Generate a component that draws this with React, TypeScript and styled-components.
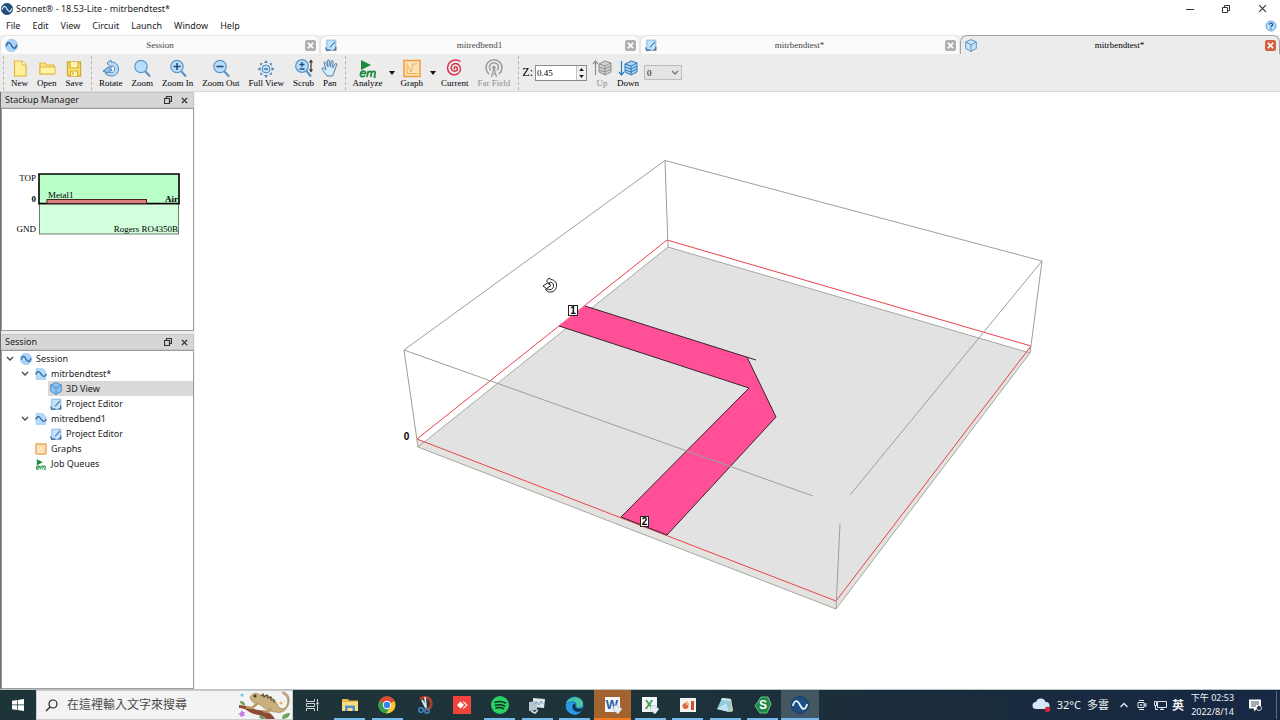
import React from "react";
import styled, { createGlobalStyle, css } from "styled-components";

const SANS = `"Noto Sans", "Noto Sans CJK TC", sans-serif`;
const SERIF = `"Liberation Serif", serif`;

const GlobalStyle = createGlobalStyle`
  * { box-sizing: border-box; }
  body { margin: 0; background: #fff; font-family: ${SANS}; font-size: 9px; color: #222; }
  button { border: 0; background: none; padding: 0; margin: 0; font: inherit; color: inherit; }
  svg { display: block; flex: none; }
  ul { list-style: none; margin: 0; padding: 0; }
`;

const Window = styled.div`
  display: flex;
  flex-direction: column;
  height: 100vh;
  overflow: hidden;
`;

/* ---------- title and menu ---------- */

const TitleBar = styled.header`
  display: flex;
  align-items: center;
  height: 17px;
  flex: none;
  padding-left: 1px;
  gap: 3px;
`;

const Title = styled.h1`
  flex: 1;
  margin: 0;
  font-size: 9px;
  line-height: 16px;
  font-weight: 400;
`;

const WindowButton = styled.button`
  width: 36px;
  height: 16px;
  display: flex;
  align-items: center;
  justify-content: center;
`;

const WindowButtons = styled.div`
  display: flex;
`;

const MenuBar = styled.nav`
  display: flex;
  align-items: center;
  height: 18px;
  flex: none;
  padding-right: 3px;
`;

const MenuItem = styled.button`
  padding: 0 6px;
  line-height: 16px;
`;

const Spacer = styled.div`
  flex: 1;
`;

/* ---------- document tabs ---------- */

const TabStrip = styled.div`
  display: grid;
  grid-template-columns: repeat(4, 1fr);
  height: 19px;
  flex: none;
  background: #f1f1f1;
`;

const Tab = styled.div<{ $active?: boolean }>`
  display: flex;
  align-items: center;
  padding: 0 3px 0 4px;
  border: 1px solid ${(p) => (p.$active ? "#a2a2a2" : "#e6e6e6")};
  border-bottom: 0;
  border-radius: 7px 7px 0 0;
  background: ${(p) => (p.$active ? "#ececec" : "#fbfbfb")};
  color: ${(p) => (p.$active ? "#000" : "#444")};
`;

const TabName = styled.button`
  flex: 1;
  padding-right: 3px;
  font-family: ${SERIF};
  font-size: 9px;
  line-height: 16px;
  text-align: center;
`;

const TabClose = styled.button<{ $active?: boolean }>`
  width: 11px;
  height: 11px;
  display: flex;
  align-items: center;
  justify-content: center;
  border-radius: 2px;
  background: ${(p) => (p.$active ? "#d3623f" : "#b0b0b0")};
`;

/* ---------- tool bar ---------- */

const ToolBar = styled.div`
  display: flex;
  align-items: center;
  height: 38px;
  flex: none;
  background: #ececec;
  border-bottom: 1px solid #dadada;
`;

const ToolSeparator = styled.div`
  width: 7px;
  height: 34px;
  flex: none;
  display: flex;
  justify-content: center;
  &::before {
    content: "";
    border-left: 1px dashed #b5b5b5;
  }
`;

const Tool = styled.button`
  display: flex;
  flex-direction: column;
  align-items: center;
  padding: 1px 5px 0 4px;
  font-family: ${SERIF};
  font-size: 9px;
  line-height: 10px;
  color: #000;
  white-space: nowrap;
  svg {
    margin: 0 -4px;
  }
  &:disabled {
    color: #8c8c8c;
  }
`;

const ToolArrow = styled.button`
  width: 9px;
  height: 34px;
  display: flex;
  align-items: center;
  justify-content: center;
`;

const DepthField = styled.label`
  display: flex;
  align-items: center;
  gap: 2px;
  margin-right: 5px;
  font-family: ${SERIF};
  font-size: 12px;
  color: #000;
`;

const Spin = styled.span`
  display: flex;
  width: 52px;
  height: 16px;
  border: 1px solid #8a8a8a;
  background: #fff;
`;

const SpinInput = styled.input`
  flex: 1;
  min-width: 0;
  border: 0;
  padding: 0 1px;
  font-family: ${SERIF};
  font-size: 9px;
  background: transparent;
  color: #000;
`;

const SpinButtons = styled.span`
  display: flex;
  flex-direction: column;
  width: 10px;
  background: #f0f0f0;
  border-left: 1px solid #c4c4c4;
  button {
    flex: 1;
    display: flex;
    align-items: center;
    justify-content: center;
  }
`;

const SelectBox = styled.span`
  display: grid;
  align-items: center;
  width: 38px;
  height: 15px;
  border: 1px solid #bcbcbc;
  background: #e4e4e4;
  select,
  svg {
    grid-area: 1 / 1;
  }
  svg {
    justify-self: end;
    margin-right: 2px;
    pointer-events: none;
  }
  select {
    appearance: none;
    width: 100%;
    border: 0;
    padding: 0 2px;
    background: transparent;
    font-family: ${SERIF};
    font-size: 9px;
    color: #000;
  }
`;

/* ---------- side panels ---------- */

const Body = styled.div`
  flex: 1;
  min-height: 0;
  display: flex;
`;

const Side = styled.aside`
  width: 195px;
  flex: none;
  display: flex;
  flex-direction: column;
  gap: 3px;
  background: #ececec;
  border-left: 1px solid #6e6e6e;
  border-right: 1px solid #f4f4f4;
`;

const Panel = styled.section<{ $grow?: boolean }>`
  display: flex;
  flex-direction: column;
  ${(p) =>
    p.$grow
      ? css`
          flex: 1;
          min-height: 0;
        `
      : css`
          flex: none;
        `}
`;

const PanelHeader = styled.div`
  display: flex;
  align-items: center;
  height: 16px;
  padding: 0 5px 0 4px;
  background: #d6d6d6;
  border: 1px solid #c6c6c6;
  border-left: 0;
`;

const PanelTitle = styled.h2`
  flex: 1;
  margin: 0;
  font-size: 9px;
  line-height: 14px;
  font-weight: 400;
`;

const PanelButton = styled.button`
  width: 16px;
  height: 14px;
  display: flex;
  align-items: center;
  justify-content: center;
  & + & {
    margin-right: -4px;
  }
`;

const PanelBody = styled.div`
  flex: 1;
  background: #fff;
  border: 1px solid #9c9c9c;
`;

const StackupBody = styled(PanelBody)`
  padding: 62px 0 93px 12px;
`;

const TreeRow = styled.li<{ $level: number }>`
  display: flex;
  align-items: center;
  height: 15px;
  padding-left: ${(p) => 1 + p.$level * 15}px;
`;

const TreeToggle = styled.button`
  width: 13px;
  height: 15px;
  display: flex;
  align-items: center;
  justify-content: center;
`;

const TreeLabel = styled.button<{ $selected?: boolean }>`
  flex: 1;
  display: flex;
  align-items: center;
  gap: 4px;
  height: 15px;
  margin-left: 2px;
  padding-left: 2px;
  text-align: left;
  line-height: 15px;
  background: ${(p) => (p.$selected ? "#d9d9d9" : "transparent")};
`;

const Viewport = styled.main`
  flex: 1;
  min-width: 0;
  background: #fff;
  svg {
    width: 100%;
    height: 100%;
  }
`;

/* ---------- task bar ---------- */

const TaskBar = styled.footer`
  display: flex;
  height: 31px;
  flex: none;
  border-top: 1px solid #b9c0c0;
  background: linear-gradient(90deg, #1d3439 0%, #1d3339 50%, #1b2c3c 70%, #162843 100%);
  color: #f2f4f6;
`;

const StartButton = styled.button`
  width: 36px;
  display: flex;
  align-items: center;
  justify-content: center;
`;

const SearchBox = styled.label`
  width: 257px;
  display: flex;
  align-items: center;
  padding-left: 8px;
  background: #f3f3f3;
  border: 1px solid #c9cdcd;
`;

const SearchInput = styled.input`
  flex: 1;
  min-width: 0;
  border: 0;
  padding: 0 0 0 9px;
  background: transparent;
  font-family: ${SANS};
  font-size: 12px;
  line-height: 18px;
  &::placeholder {
    color: #4c4c4c;
    opacity: 1;
  }
`;

const TaskView = styled.button`
  width: 38px;
  display: flex;
  align-items: center;
  justify-content: center;
`;

const Apps = styled.div`
  display: grid;
  grid-template-columns: repeat(13, 1fr);
  width: 488px;
`;

type AppState = "idle" | "open" | "alert" | "current";

const AppButton = styled.button<{ $state: AppState }>`
  display: flex;
  align-items: center;
  justify-content: center;
  border-top: 2px solid transparent;
  border-bottom: 2px solid transparent;
  ${(p) =>
    p.$state === "open" &&
    css`
      background: linear-gradient(#76b9ed, #76b9ed) 50% 100% / 31px 2px no-repeat border-box;
    `}
  ${(p) =>
    p.$state === "alert" &&
    css`
      background: #a3632f;
      border-color: #a3632f transparent #f37a1f;
    `}
  ${(p) =>
    p.$state === "current" &&
    css`
      background: #445863;
      border-color: #445863 transparent #76b9ed;
    `}
`;

const Tray = styled.div`
  display: flex;
  align-items: center;
`;

const Weather = styled.button`
  display: flex;
  align-items: center;
  gap: 6px;
  font-size: 11px;
  line-height: 16px;
  margin-right: 6px;
`;

const TrayButton = styled.button`
  width: 18px;
  height: 28px;
  display: flex;
  align-items: center;
  justify-content: center;
`;

const InputMode = styled(TrayButton)`
  font-size: 12px;
  font-weight: 700;
`;

const Clock = styled.button`
  width: 51px;
  font-size: 9px;
  line-height: 14px;
  text-align: center;
`;

const NoticeButton = styled.button`
  width: 34px;
  display: flex;
  align-items: center;
  justify-content: center;
`;

const DesktopEdge = styled.button`
  width: 4px;
  height: 28px;
  margin-left: 4px;
  border-left: 1px solid #5d6b80;
`;

/* ---------- icons ---------- */

const BLUE = "#4d87b5";
const PALE = "#b9dcfa";

const WaveIcon = ({ size = 12, dark }: { size?: number; dark?: boolean }) => (
  <svg width={size} height={size} viewBox="0 0 20 20">
    <circle cx="10" cy="10" r="9.5" fill={dark ? "#1f4e80" : "#a9d3fa"} stroke={dark ? "#173c64" : "#8fc0ee"} />
    <path d="M2 11C4 4 7 4 10 10s6 6 8-1" fill="none" stroke={dark ? "#e8f3ff" : "#1f5c94"} strokeWidth="2" />
  </svg>
);

const ProjectIcon = () => (
  <svg width="12" height="12" viewBox="0 0 20 20">
    <path d="M2 1h11l5 5v13H2z" fill="#b5d9fb" stroke="#8fc0ee" />
    <path d="M1 11C4 4 7 5 10 10s6 6 9 0" fill="none" stroke="#1f5c94" strokeWidth="2" />
  </svg>
);

const EditorIcon = () => (
  <svg width="12" height="12" viewBox="0 0 20 20">
    <path d="M3 2h15v14l-3 3H3z" fill="#c5e2fb" stroke="#7fb0dc" strokeWidth="1.5" />
    <path d="M16 4L9 12l-2 3 3-1.500L17 6z" fill="#3774ad" />
    <path d="M1 14l2 5 6-1M18 13v5h-4" fill="none" stroke="#35648f" strokeWidth="2" />
  </svg>
);

const CubeIcon = ({ strong }: { strong?: boolean }) => (
  <svg width="12" height="13" viewBox="0 0 20 22">
    <path d="M10 1l9 4v11l-9 5-9-5V5z" fill={strong ? "#8cc3f5" : "#c5e4fb"} stroke="#3f7fb3" strokeWidth="1.3" />
    <path d="M1 5l9 5 9-5M10 10v11" fill="none" stroke="#3f7fb3" strokeWidth="1.3" />
  </svg>
);

const GraphSmallIcon = () => (
  <svg width="12" height="12" viewBox="0 0 20 20">
    <rect x="1.5" y="1.5" width="17" height="17" rx="1" fill="#fbd9ab" stroke="#e9a455" strokeWidth="2" />
    <path d="M6 5v10M6 15h9M9 12V7l4 5" fill="none" stroke="#fff5e2" strokeWidth="1.6" />
  </svg>
);

const EmMark = ({ size = 20 }: { size?: number }) => (
  <svg width={size} height={size} viewBox="0 0 20 20">
    <path d="M3 2l10 5-10 5z" fill="#1b8a3c" />
    <path
      d="M2.500 15.500h5c.6-3-4-3.500-5 .2-.8 3.500 3.200 3.500 4.600 1.800M9 19l1.300-6M10 15c1.500-2.300 4-2.300 3.400.4L12.600 19M13.400 15c1.500-2.300 4.300-2.300 3.700.4L16.300 19h1.500"
      fill="none"
      stroke="#1b8a3c"
      strokeWidth="1.7"
    />
  </svg>
);

const Lens = ({ children }: { children?: React.ReactNode }) => (
  <svg width="20" height="20" viewBox="0 0 20 20">
    <path d="M13 13l5 5.500" stroke="#5d95c2" strokeWidth="2.2" />
    <circle cx="9" cy="8.500" r="6.200" fill={PALE} stroke="#5d95c2" strokeWidth="1.2" />
    {children}
  </svg>
);

const LayerBox = ({ up }: { up?: boolean }) => {
  const line = up ? "#8d8d8d" : "#2f79b5";
  const fill = up ? "#d3d3d3" : "#a9d3f7";
  return (
    <svg width="20" height="20" viewBox="0 0 20 20">
      <path d="M7 6l6-3 6 2v9l-6 3-6-3z" fill={fill} stroke={line} />
      <path d="M7 6l6 2 6-3M7 9l6 2 6-3M7 12l6 2 6-3M13 8v9" fill="none" stroke={line} />
      <path d={up ? "M3.500 17V3M1 6l2.500-3L6 6" : "M3.500 3v14M1 14l2.500 3L6 14"} fill="none" stroke={line} strokeWidth="1.2" />
    </svg>
  );
};

const toolIcons: Record<string, React.ReactNode> = {
  New: (
    <svg width="20" height="20" viewBox="0 0 20 20">
      <path d="M4.500 3h7.500l4 4v11H4.500z" fill="#fff09a" stroke="#dfb63c" strokeWidth="1.2" />
      <path d="M12 3v4h4" fill="#fffbe0" stroke="#dfb63c" />
    </svg>
  ),
  Open: (
    <svg width="20" height="20" viewBox="0 0 20 20">
      <path d="M3 16V5h5l1.500 2H17v9z" fill="#fbe584" stroke="#dfb63c" strokeWidth="1.2" />
      <path d="M3 16V9h15v7z" fill="#fff3a6" stroke="#dfb63c" />
    </svg>
  ),
  Save: (
    <svg width="20" height="20" viewBox="0 0 20 20">
      <path d="M3.500 4h13v14h-12l-1-1z" fill="#fde873" stroke="#d4a92f" strokeWidth="1.4" />
      <path d="M6 4v6h8V4M6.500 18v-5h7v5M9 14v3" fill="#fff6b8" stroke="#d4a92f" strokeWidth="1.2" />
    </svg>
  ),
  Rotate: (
    <svg width="20" height="20" viewBox="0 0 20 20">
      <path d="M6 5l4-3v2c5 0 7.500 3 7.500 7s-3 7-7 7c-3.500 0-6-1.500-6.500-3.500l3-1c1 1.500 5.500 2 6.500-1S13 8 10 8v2z" fill={PALE} stroke={BLUE} />
      <path d="M2 13l5-4 4 3-4 3z" fill="#8fbfe8" stroke={BLUE} />
    </svg>
  ),
  Zoom: <Lens />,
  "Zoom In": (
    <Lens>
      <path d="M5.500 8.500h7M9 5v7" stroke="#1d4f7c" strokeWidth="1.6" />
    </Lens>
  ),
  "Zoom Out": (
    <Lens>
      <path d="M5.500 8.500h7" stroke="#1d4f7c" strokeWidth="1.6" />
    </Lens>
  ),
  "Full View": (
    <svg width="20" height="20" viewBox="0 0 20 20">
      <circle cx="10" cy="11" r="4" fill={PALE} stroke={BLUE} />
      <path d="M10 2l2 3H8zM10 20l2-3H8zM1.500 11l3-2v4zM18.500 11l-3-2v4zM4 5l3 .5L4.500 8zM16 5l-3 .5L15.500 8zM4 17l3-.5L4.500 14zM16 17l-3-.5 2.500-2.500z" fill="#4a86ba" />
      <path d="M8 11h4" stroke="#1d4f7c" />
    </svg>
  ),
  Scrub: (
    <svg width="20" height="20" viewBox="0 0 20 20">
      <path d="M12 12.500l5 6" stroke="#5d95c2" strokeWidth="2.2" />
      <circle cx="8" cy="8" r="6.3" fill={PALE} stroke="#5d95c2" strokeWidth="1.2" />
      <path d="M5.500 6.500h5M8 4v5M5.500 11h5" stroke="#1d4f7c" strokeWidth="1.3" />
      <path d="M17 3v10M15.500 4.500L17 2.500l1.500 2M15.500 11.500l1.500 2 1.500-2" fill="none" stroke="#333" strokeWidth="1.2" />
    </svg>
  ),
  Pan: (
    <svg width="20" height="20" viewBox="0 0 20 20">
      <path
        d="M7 18C5 15 3 13 2 11c0-1.500 1.500-1.500 2.500-.3L6 12 4 5c0-1.500 1.500-1.500 2-.3L8 9 7.500 3c0-1.500 1.800-1.500 2 0l.8 6 1-5.500c.3-1.500 2-1.200 1.800.3L12.500 10 15 6c.8-1.200 2.300-.5 1.700.8L14.500 13c-.3 2-1.500 3.500-2 5z"
        fill="#d5eafb"
        stroke="#4d7fa8"
      />
    </svg>
  ),
  Analyze: <EmMark />,
  Graph: (
    <svg width="20" height="20" viewBox="0 0 20 20">
      <rect x="2" y="2.500" width="16" height="16" fill="#ffe3b8" stroke="#ef9d3c" strokeWidth="1.5" />
      <path d="M5 5v10.500h11M6 8l3 6 2-8h4" fill="none" stroke="#f3ae5c" />
    </svg>
  ),
  Current: (
    <svg width="20" height="20" viewBox="0 0 20 20">
      <path
        d="M10 11c-1.500-.5-.8-2.500.8-2.200 2.200.4 2.200 3.700-.3 4.300-3 .6-4.800-2-4.200-4.500C7 5.500 11 4.700 13.500 6.700c3 2.500 2.500 7.300-.8 9.200-3.500 2-8 .5-9.500-3C1.500 9 3.500 4 7.500 2.500c3-1 6-.5 8 1"
        fill="none"
        stroke="#d8354c"
        strokeWidth="1.5"
      />
    </svg>
  ),
  "Far Field": (
    <svg width="20" height="20" viewBox="0 0 20 20">
      <path d="M5 16a8 8 0 1 1 10 0M7 12.500a4.500 4.500 0 1 1 6 0" fill="none" stroke="#9a9a9a" strokeWidth="1.5" />
      <circle cx="10" cy="9.500" r="1.7" fill="#9a9a9a" />
      <path d="M10 10l-2.500 9M10 10l2.500 9M8 16h4" stroke="#9a9a9a" strokeWidth="1.2" />
    </svg>
  ),
};

const Cross = ({ size = 7, color = "#333", weight = 1 }: { size?: number; color?: string; weight?: number }) => (
  <svg width={size} height={size} viewBox="0 0 8 8">
    <path d="M1 1l6 6M7 1L1 7" stroke={color} strokeWidth={weight} />
  </svg>
);

const Restore = ({ weight = 1 }: { weight?: number }) => (
  <svg width="8" height="8" viewBox="0 0 8 8">
    <path d="M.5 2.500h5v5h-5zM2.500 2.500v-2h5v5h-2" fill="none" stroke="#333" strokeWidth={weight} />
  </svg>
);

const Chevron = ({ up, color = "#444" }: { up?: boolean; color?: string }) => (
  <svg width="8" height="6" viewBox="0 0 8 6">
    <path d={up ? "M.5 5L4 1.500 7.500 5" : "M1 1l3 3 3-3"} fill="none" stroke={color} strokeWidth="1.3" />
  </svg>
);

const Triangle = ({ up, small }: { up?: boolean; small?: boolean }) => (
  <svg width={small ? 5 : 6} height={small ? 3 : 4} viewBox="0 0 6 4">
    <path d={up ? "M0 4h6L3 0z" : "M0 0h6L3 4z"} fill="#111" />
  </svg>
);

/* ---------- drawings ---------- */

const StackupDrawing = () => (
  <svg width="166" height="66" viewBox="14 171 166 66" fontFamily={SERIF} fontSize="9" fill="#000">
    <rect x="39.500" y="204" width="139" height="30" fill="#d2ffdc" stroke="#6d7d70" />
    <rect x="39" y="174" width="140" height="30" fill="#b8ffc8" />
    <path d="M39 204.500V174h140v30.500M39 203.500h140" fill="none" stroke="#000" strokeWidth="1.6" />
    <rect x="47" y="199.500" width="99.500" height="4" fill="#d98080" stroke="#4a1f1f" />
    <text x="36" y="181" textAnchor="end">TOP</text>
    <text x="36" y="202" textAnchor="end" fontWeight="700">0</text>
    <text x="36" y="232" textAnchor="end">GND</text>
    <text x="48" y="198">Metal1</text>
    <text x="178" y="202" textAnchor="end" fontWeight="700">Air</text>
    <text x="178" y="232" textAnchor="end">Rogers RO4350B</text>
  </svg>
);

const Scene = () => (
  <svg viewBox="195 92 1085 597" preserveAspectRatio="xMidYMid meet" role="img" aria-label="3D View">
    <polygon points="668,247 1030,353 836,609 418,447" fill="#e2e2e2" />
    <polygon points="417,439 836,601 1031,345 1030,353 836,609 418,447" fill="#e3e2df" />
    <path d="M668 247L1030 353 836 609 418 447z" fill="none" stroke="#a3a9a3" />
    <path d="M667 240L1031 346 836 601 417 439z" fill="none" stroke="#e8434c" />
    <polygon points="585,306 747,357 776,417 667,535 621,517 749,388 559,326" fill="#ff4f97" />
    <path d="M585 306L756 360M747 357l29 60-109 118-46-18L749 388 559 326" fill="none" stroke="#38262e" />
    <path
      d="M404 350L665 160.500 1042 261M665 160.500L668 247M404 350l14 97M1042 261l-12 92M404 350l409 146M1042 261L850 495M840 524l-4 85"
      fill="none"
      stroke="#9b9f9f"
    />
    <g fontFamily={`"Liberation Sans", sans-serif`} fontSize="10" fontWeight="700" textAnchor="middle" fill="#000">
      <rect x="568.500" y="305.500" width="9" height="10" fill="#fff" stroke="#222" />
      <text x="573" y="314">1</text>
      <rect x="640.500" y="516.500" width="8" height="10" fill="#fff" stroke="#222" />
      <text x="644.500" y="525">2</text>
      <text x="406.500" y="440">0</text>
    </g>
    <g fill="#fff" stroke="#222">
      <path d="M549 278l2 1.500c4 .5 6 3.500 5.500 7s-3.500 6-7 5.500c-2-.3-3.500-1.500-4-3l3 .2c2 1 4.500 0 5-2.500s-1-4.500-3.500-4.700l-.5 2-3-3z" />
      <path d="M543 286l4.500-3 3.500 2.500-4.500 3z" />
    </g>
  </svg>
);

const Chameleon = () => (
  <svg width="54" height="28" viewBox="0 0 54 28">
    <path d="M1 14c8 0 12 4 20 5 7 1 12 2 16 9h-9c-3-4-8-4-12-5C10 21 8 17 1 17z" fill="#8d4a35" />
    <path
      d="M12 6c2-4 8-5 11-1 8-2 13 2 16 8 2 4 5 6 8 4 3-3 4-8 1-12-1-1-3-2-4-4 5 0 8 5 7 10-1 7-7 12-13 10-6 0-12-4-17-8-4 0-8-2-9-7z"
      fill="#cbb07e"
      stroke="#9a8050"
      strokeWidth=".7"
    />
    <path d="M23 5l2-2 1 3 3-2 1 3 3-1 0 3 3 0 0 3" fill="none" stroke="#5e5038" strokeWidth="1.2" />
    <path d="M20 12l-6 5-6-1M33 17l-3 4-5-1" fill="none" stroke="#b99a63" strokeWidth="2.4" />
    <circle cx="17" cy="5" r="1.5" fill="#43382a" />
    <path d="M2 10c3 0 5 1 5 4-3 0-5-1-5-4zM44 28c0-4 3-6 8-6 0 3-3 6-8 6zM27 28c0-3-3-4-6-3 0 2 3 4 6 3z" fill="#6fa35e" />
    <path d="M4 19l1 2 2 0-1 2 1 2-2 0-2 1-1-2-2-1 2-1z" fill="#c879e6" />
    <circle cx="4" cy="4" r="1.5" fill="#67d0dc" />
    <circle cx="43" cy="12" r="1.6" fill="#f2b63d" />
  </svg>
);

const OfficeIcon = ({ letter, color }: { letter: string; color: string }) => (
  <svg width="18" height="18" viewBox="0 0 18 18">
    <path d="M1 1h15v15H1z" fill="#f3f6f9" />
    <text x="8" y="13" textAnchor="middle" fontFamily={`"Liberation Sans", sans-serif`} fontWeight="700" fontSize="13" fill={color}>
      {letter}
    </text>
    <path d="M10 10l3-1 5 4-4 5-5-4z" fill="#e6edf3" stroke="#a8b7c4" strokeWidth=".6" />
  </svg>
);

const apps: { name: string; state: AppState; icon: React.ReactNode }[] = [
  {
    name: "File Explorer",
    state: "open",
    icon: (
      <svg width="18" height="18" viewBox="0 0 18 18">
        <path d="M1 3h6l1 1.500h9V15H1z" fill="#e9b64c" />
        <path d="M1 6h16v9H1z" fill="#fbdc83" />
        <path d="M4 15V9.500h10V15h-2.500v-3h-5v3z" fill="#4d94cf" />
      </svg>
    ),
  },
  {
    name: "Chrome",
    state: "open",
    icon: (
      <svg width="18" height="18" viewBox="0 0 18 18">
        <circle cx="9" cy="9" r="8.5" fill="#f8c92c" />
        <path d="M9 9L1.600 4.800A8.500 8.500 0 0 1 16.400 5z" fill="#e24436" />
        <path d="M9 9L1.600 4.800A8.500 8.500 0 0 0 8.200 17.500L12 11z" fill="#2fa04e" />
        <circle cx="9" cy="9" r="4.2" fill="#fff" />
        <circle cx="9" cy="9" r="3.2" fill="#3f7fea" />
      </svg>
    ),
  },
  {
    name: "Snip",
    state: "idle",
    icon: (
      <svg width="18" height="18" viewBox="0 0 18 18">
        <path d="M4 3c4-3 10-2 11 3s-2 7-5 8" fill="none" stroke="#a83d2c" strokeWidth="3" />
        <path d="M9 1l1 10M6 4l4 8" stroke="#dce4ea" strokeWidth="1.8" />
        <circle cx="5" cy="14" r="2.3" fill="none" stroke="#3e87c7" strokeWidth="1.5" />
        <circle cx="11" cy="15" r="2.2" fill="none" stroke="#3e87c7" strokeWidth="1.5" />
      </svg>
    ),
  },
  {
    name: "AnyDesk",
    state: "idle",
    icon: (
      <svg width="18" height="18" viewBox="0 0 18 18">
        <path d="M0 0h18v18H0z" fill="#ef443b" />
        <path d="M7.500 5.500L11 9l-3.500 3.500L4 9zM9.500 5.500h1.500L14.500 9 11 12.500H9.500L13 9z" fill="#fff" />
      </svg>
    ),
  },
  {
    name: "Spotify",
    state: "open",
    icon: (
      <svg width="18" height="18" viewBox="0 0 18 18">
        <circle cx="9" cy="9" r="9" fill="#27d163" />
        <path d="M4 6.200c4-1.200 8-.6 10.500.8M4.500 9.200c3.500-1 6.500-.5 9 .8M5 12c3-.8 5.500-.4 7.500.7" fill="none" stroke="#15291e" strokeWidth="1.5" strokeLinecap="round" />
      </svg>
    ),
  },
  {
    name: "System Monitor",
    state: "open",
    icon: (
      <svg width="18" height="18" viewBox="0 0 18 18">
        <path d="M5 2l12 1-1 9-11-1z" fill="#dfe7ec" />
        <path d="M1 6l8-1v9l-8 1z" fill="#b9c6cf" />
        <path d="M7 8l2-2 2 3 2-4 2 3" fill="none" stroke="#6aa0c4" />
        <path d="M3 15l4 2 3-3" fill="none" stroke="#d8dde0" strokeWidth="1.5" />
      </svg>
    ),
  },
  {
    name: "Edge",
    state: "open",
    icon: (
      <svg width="19" height="19" viewBox="0 0 18 18">
        <circle cx="9" cy="9" r="8.5" fill="#1c7fd0" />
        <path d="M1 7C3 1 12-1 16 4c3 4 0 8-4 7-2-.5-1-2-1-3 0-4-7-4-10-1z" fill="#48c5a6" />
        <path d="M1 8c3-3 7-2 8-.5C6 8 6 13 10 15c2 1 4 .5 5.500 0A8.500 8.500 0 0 1 1 8z" fill="#2b9be6" />
        <path d="M7 10c0-2 1-2.500 2.500-2.500.8 2-.5 3.500 2.500 4.500 2 .5 4 0 4.500-1 .5 1-.5 3-1.500 3.500C10 16 7 13 7 10z" fill="#10324f" />
      </svg>
    ),
  },
  { name: "Word", state: "alert", icon: <OfficeIcon letter="W" color="#2b5caa" /> },
  { name: "Excel", state: "open", icon: <OfficeIcon letter="X" color="#3b9a4c" /> },
  {
    name: "Slides",
    state: "open",
    icon: (
      <svg width="16" height="14" viewBox="0 0 16 14">
        <path d="M0 0h16v14H0z" fill="#f7f3f0" />
        <circle cx="5.500" cy="8" r="3" fill="#d86b3c" />
        <path d="M6 3a4 4 0 0 1 3 4H6z" fill="#efb08d" />
        <path d="M11 3h3v9h-3z" fill="#c9552b" />
      </svg>
    ),
  },
  {
    name: "Notepad",
    state: "open",
    icon: (
      <svg width="18" height="18" viewBox="0 0 18 18">
        <path d="M6 2l9 1 2 12-3 1-13-3z" fill="#8fcbdc" />
        <path d="M6 2l9 1 0 2L5 4z" fill="#d9e6e8" />
        <path d="M1 13l9-6 3 9z" fill="#bfe3ec" />
        <path d="M15 3l2 12-3 1z" fill="#d9c9a4" />
      </svg>
    ),
  },
  {
    name: "S Editor",
    state: "open",
    icon: (
      <svg width="18" height="18" viewBox="0 0 18 18">
        <path d="M7 1l7 0 3 7-4 9-7 0-5-7z" fill="#1f8a48" stroke="#6cc08a" strokeLinejoin="round" />
        <text x="9" y="13" textAnchor="middle" fontFamily={`"Liberation Sans", sans-serif`} fontWeight="700" fontSize="12" fill="#fff">
          S
        </text>
      </svg>
    ),
  },
  { name: "Sonnet", state: "current", icon: <WaveIcon size={18} dark /> },
];

/* ---------- page data ---------- */

const menus = ["File", "Edit", "View", "Circuit", "Launch", "Window", "Help"];

const tabs = [
  { id: "session", name: "Session", icon: <WaveIcon size={13} /> },
  { id: "bend1", name: "mitredbend1", icon: <EditorIcon /> },
  { id: "test-editor", name: "mitrbendtest*", icon: <EditorIcon /> },
  { id: "test-3d", name: "mitrbendtest*", icon: <CubeIcon />, active: true },
];

const toolGroups = [
  ["New", "Open", "Save"],
  ["Rotate", "Zoom", "Zoom In", "Zoom Out", "Full View", "Scrub", "Pan"],
  ["Analyze", "Graph", "Current", "Far Field"],
];

const withMenu = ["Analyze", "Graph"];

const tree = [
  { id: 1, level: 0, name: "Session", icon: <WaveIcon />, open: true },
  { id: 2, level: 1, name: "mitrbendtest*", icon: <ProjectIcon />, open: true },
  { id: 3, level: 2, name: "3D View", icon: <CubeIcon strong />, selected: true },
  { id: 4, level: 2, name: "Project Editor", icon: <EditorIcon /> },
  { id: 5, level: 1, name: "mitredbend1", icon: <ProjectIcon />, open: true },
  { id: 6, level: 2, name: "Project Editor", icon: <EditorIcon /> },
  { id: 7, level: 1, name: "Graphs", icon: <GraphSmallIcon /> },
  { id: 8, level: 1, name: "Job Queues", icon: <EmMark size={12} /> },
];

const PanelHead = ({ title }: { title: string }) => (
  <PanelHeader>
    <PanelTitle>{title}</PanelTitle>
    <PanelButton aria-label={`Float ${title}`}>
      <Restore weight={1.2} />
    </PanelButton>
    <PanelButton aria-label={`Close ${title}`}>
      <Cross weight={1.6} />
    </PanelButton>
  </PanelHeader>
);

export default function App() {
  return (
    <Window>
      <GlobalStyle />
      <TitleBar>
        <WaveIcon size={12} dark />
        <Title>Sonnet® - 18.53-Lite - mitrbendtest*</Title>
        <WindowButtons>
          <WindowButton aria-label="Minimize">
            <svg width="8" height="8" viewBox="0 0 8 8">
              <path d="M0 4.500h8" stroke="#333" />
            </svg>
          </WindowButton>
          <WindowButton aria-label="Restore">
            <Restore />
          </WindowButton>
          <WindowButton aria-label="Close">
            <Cross size={9} />
          </WindowButton>
        </WindowButtons>
      </TitleBar>

      <MenuBar>
        {menus.map((m) => (
          <MenuItem key={m}>{m}</MenuItem>
        ))}
        <Spacer />
        <button aria-label="Help topics">
          <svg width="12" height="12" viewBox="0 0 12 12">
            <circle cx="6" cy="6" r="5" fill="#b5dbfa" stroke="#6aa6d8" />
            <path d="M4.300 4.700C4.300 2.500 7.800 2.600 7.700 4.600 7.600 5.800 6 5.800 6 7.200M6 8.200v1.300" fill="none" stroke="#1f5c94" strokeWidth="1.3" />
          </svg>
        </button>
      </MenuBar>

      <TabStrip>
        {tabs.map((t) => (
          <Tab key={t.id} $active={t.active}>
            {t.icon}
            <TabName>{t.name}</TabName>
            <TabClose $active={t.active} aria-label={`Close ${t.name}`}>
              <Cross color="#fff" weight={1.8} />
            </TabClose>
          </Tab>
        ))}
      </TabStrip>

      <ToolBar>
        {toolGroups.map((group, i) => (
          <React.Fragment key={i}>
            <ToolSeparator />
            {group.map((name) => (
              <React.Fragment key={name}>
                <Tool disabled={name === "Far Field"}>
                  {toolIcons[name]}
                  {name}
                </Tool>
                {withMenu.includes(name) && (
                  <ToolArrow aria-label={`${name} options`}>
                    <Triangle />
                  </ToolArrow>
                )}
              </React.Fragment>
            ))}
          </React.Fragment>
        ))}
        <ToolSeparator />
        <DepthField>
          Z:
          <Spin>
            <SpinInput type="text" defaultValue="0.45" />
            <SpinButtons>
              <button aria-label="Increase">
                <Triangle up small />
              </button>
              <button aria-label="Decrease">
                <Triangle small />
              </button>
            </SpinButtons>
          </Spin>
        </DepthField>
        <Tool disabled>
          <LayerBox up />
          Up
        </Tool>
        <Tool>
          <LayerBox />
          Down
        </Tool>
        <SelectBox>
          <select aria-label="Level" defaultValue="0">
            <option>0</option>
          </select>
          <Chevron color="#777" />
        </SelectBox>
      </ToolBar>

      <Body>
        <Side>
          <Panel>
            <PanelHead title="Stackup Manager" />
            <StackupBody>
              <StackupDrawing />
            </StackupBody>
          </Panel>
          <Panel $grow>
            <PanelHead title="Session" />
            <PanelBody>
              <ul>
                {tree.map((n) => (
                  <TreeRow key={n.id} $level={n.level}>
                    <TreeToggle aria-label={`Toggle ${n.name}`} disabled={!n.open}>
                      {n.open && <Chevron />}
                    </TreeToggle>
                    <TreeLabel $selected={n.selected}>
                      {n.icon}
                      {n.name}
                    </TreeLabel>
                  </TreeRow>
                ))}
              </ul>
            </PanelBody>
          </Panel>
        </Side>
        <Viewport>
          <Scene />
        </Viewport>
      </Body>

      <TaskBar>
        <StartButton aria-label="Start">
          <svg width="12" height="12" viewBox="0 0 12 12">
            <path d="M0 1.700L5 1v4.600H0zM5.700.9L12 0v5.600H5.700zM0 6.300h5V11l-5-.7zM5.700 6.300H12V12l-6.300-.9z" fill="#fff" />
          </svg>
        </StartButton>
        <SearchBox>
          <svg width="13" height="13" viewBox="0 0 13 13">
            <circle cx="8" cy="5" r="4" fill="none" stroke="#222" strokeWidth="1.2" />
            <path d="M5 8L1 12" stroke="#222" strokeWidth="1.3" />
          </svg>
          <SearchInput type="text" placeholder="在這裡輸入文字來搜尋" aria-label="在這裡輸入文字來搜尋" />
          <Chameleon />
        </SearchBox>
        <TaskView aria-label="Task View">
          <svg width="13" height="12" viewBox="0 0 13 12">
            <path d="M.5 0v2.500h8V0M.5 12V9.500h8V12M.5 4.500h8v3h-8zM11.500 0v3M11.500 6v6" fill="none" stroke="#c9d2d4" />
            <path d="M10.500 3.500h2v2h-2z" fill="#fff" />
          </svg>
        </TaskView>
        <Apps>
          {apps.map((a) => (
            <AppButton key={a.name} $state={a.state} aria-label={a.name}>
              {a.icon}
            </AppButton>
          ))}
        </Apps>
        <Spacer />
        <Tray>
          <Weather>
            <svg width="19" height="16" viewBox="0 0 19 16">
              <path d="M4 12a3.500 3.500 0 0 1 0-7 5 5 0 0 1 9.500 0 3.500 3.500 0 0 1 1 7z" fill="#d7e6f6" />
              <circle cx="15.500" cy="12.500" r="2.7" fill="#d3243d" />
            </svg>
            <span>32°C</span>
            <span>多雲</span>
          </Weather>
          <TrayButton aria-label="Show hidden icons">
            <Chevron up color="#e6eaee" />
          </TrayButton>
          <TrayButton aria-label="Camera">
            <svg width="10" height="12" viewBox="0 0 10 12">
              <path d="M1 3.500h6v5H1zM7 5.500l2-1v3l-2-1M2 1.500h5M2 10.500h5" fill="none" stroke="#dfe4ea" />
              <circle cx="4" cy="6" r="1" fill="#dfe4ea" />
            </svg>
          </TrayButton>
          <TrayButton aria-label="Network">
            <svg width="13" height="11" viewBox="0 0 13 11">
              <path d="M3.500 1.500h9v6h-9zM6 9.500h4M8 7.500v2M.5 1.500h2v4h-2zM1.500 5.500v4H4" fill="none" stroke="#dfe4ea" />
            </svg>
          </TrayButton>
          <InputMode>英</InputMode>
          <Clock>
            下午 02:53
            <br />
            2022/8/14
          </Clock>
          <NoticeButton aria-label="Notifications">
            <svg width="13" height="13" viewBox="0 0 13 13">
              <path d="M0 .5h12v9H8L5 12.500v-3H0z" fill="#fff" />
              <path d="M2 3h8M2 5h8M2 7h5" stroke="#1a2b45" strokeWidth=".8" />
              <circle cx="10" cy="9" r="2.5" fill="#1a2b45" stroke="#fff" strokeWidth=".8" />
            </svg>
          </NoticeButton>
          <DesktopEdge aria-label="Show desktop" />
        </Tray>
      </TaskBar>
    </Window>
  );
}
